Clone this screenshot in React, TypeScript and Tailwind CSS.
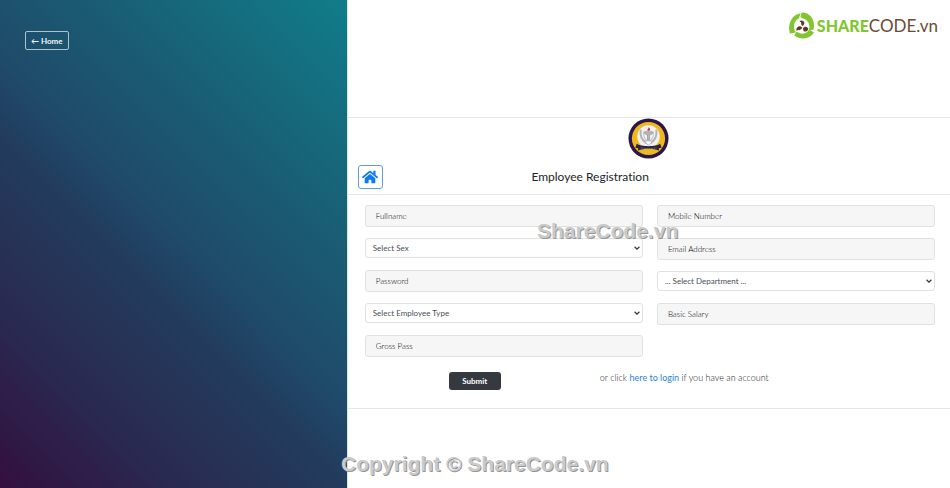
import { FaHome } from "react-icons/fa"

interface FieldProps {
  label: string
  type?: string
}

function TextField({ label, type = "text" }: FieldProps) {
  return (
    <input
      type={type}
      aria-label={label}
      placeholder={label}
      className="h-[22px] w-full min-w-0 rounded-[3px] border border-[#dfe1e3] bg-[#f6f6f6] px-[10px] text-[8px] font-light text-black placeholder:text-black placeholder:opacity-100"
    />
  )
}

function SelectField({ label, options }: { label: string; options: string[] }) {
  return (
    <div className="relative mb-px flex">
      <select
        aria-label={label}
        defaultValue=""
        className="h-5 w-full min-w-0 appearance-none rounded-[3px] border border-[#dfe1e3] bg-white px-[7px] text-[8px] text-[#495057]"
      >
        <option value="">{label}</option>
        {options.map((o) => (
          <option key={o}>{o}</option>
        ))}
      </select>
      <svg
        viewBox="0 0 6 4"
        className="pointer-events-none absolute right-[3px] top-2 h-1 w-[6px]"
        fill="none"
        aria-hidden="true"
      >
        <path d="M.6.7 3 3.1 5.4.7" stroke="#343a40" strokeWidth="1.3" />
      </svg>
    </div>
  )
}

function SiteLogo() {
  return (
    <div className="flex items-center gap-[2px]">
      <svg viewBox="0 0 26 27" className="h-[27px] w-[26px]" fill="none" aria-hidden="true">
        {/* three swooshes around the propeller */}
        <g fill="#80c62f">
          <path d="M.8 21.500C-1.600 11.500 2.800 2.600 11.600 1.200L10 6.200C5.600 8.400 4.200 13 5.400 17.600L6.800 20.600Z" />
          <path d="M12.600.6C21.400.4 26.600 8.400 24.600 17.400L19.600 18.600C21.800 13 19 7.800 13.800 6.600L11.400 5Z" />
          <path d="M25 20.600C21 27.200 11.400 28.600 5.200 23.200L7.800 19.600C11 22.400 15.600 22.200 18.400 19.800L20.200 17.800Z" />
        </g>
        <g fill="#5e3a22">
          <path d="M10.400 9.200C12.600 7.600 15.600 8.800 15.400 11.400L13.800 14.200C12.600 13.800 11.800 12.400 12.200 10.600Z" />
          <path d="M7.600 18.800C6.800 16.200 8.800 13.800 11.400 14.200L13.200 15.600C12.800 17.200 11.200 18.600 9.200 18Z" />
          <path d="M19.200 16.200C19.600 18.600 17.200 20.200 14.800 19.200L13.800 16.400C14.800 15 16.600 14.400 18 15.200Z" />
        </g>
      </svg>
      <p className="text-[17px] leading-6">
        <span className="text-[16px] font-black text-[#80c62f]">SHARE</span>
        <span className="text-[#6b4a36]">CODE.vn</span>
      </p>
    </div>
  )
}

function Crest() {
  return (
    <svg viewBox="0 0 42 42" className="size-[41px]" fill="none" aria-hidden="true">
      <circle cx="21" cy="21" r="20.5" fill="#2b1747" />
      <circle cx="21" cy="21" r="17" fill="#efb91e" />
      <circle cx="21" cy="19" r="11.5" fill="#f1f1f1" />
      <path d="M13 12c-1 7 1 11 6 14M29 12c1 7-1 11-6 14" stroke="#b3b3b9" strokeWidth="2" />
      <path d="M16 14c-.5 5 1 8 4 10M26 14c.5 5-1 8-4 10" stroke="#c9c9ce" strokeWidth="1.2" />
      <path d="M17 14h8v2l-3 1.500v5h-2v-5L17 16Z" fill="#b5b5bb" stroke="#85858d" strokeWidth=".6" />
      <path d="M16.5 23.5h9L21 28Z" fill="#fff" stroke="#a4a4aa" strokeWidth=".8" />
      <path d="M19.800 13c0-1.800 1.200-2 1.200-3.600 2 1.400 2 2.600 1.200 3.600Z" fill="#cf3434" />
      <path d="M9 26.500c4 3.200 20 3.200 24 0l1.500 4-3 .5.500 2.500c-7-2.500-15-2.500-22 0l.5-2.500-3-.5Z" fill="#2b2449" />
      <path d="M13 30.500c5 1.300 11 1.300 16 0" stroke="#8d85a0" strokeWidth=".8" strokeDasharray="1 .7" />
    </svg>
  )
}

const watermark =
  "pointer-events-none absolute whitespace-nowrap font-['Liberation_Sans',sans-serif] text-[21px] font-bold leading-6 text-[#cacaca] [text-shadow:1px_1px_0_#969696]"

export default function App() {
  return (
    <div className="relative flex min-h-screen overflow-hidden bg-white font-['Lato',sans-serif] text-[#212529] [font-variant-ligatures:none]">
      <aside className="flex w-[36.5%] items-start bg-[linear-gradient(45deg,#330f3e_0%,#2a2850_20%,#223c5d_42%,#1f4b6b_52%,#1a5b72_68%,#107d89_100%)] px-[25px] py-[31px]">
        <a
          href="#home"
          className="flex h-[19px] items-center rounded-[2px] border border-[#a9c3cf] px-[5px] text-[8px] font-bold text-[#eef5f7]"
        >
          ← Home
        </a>
      </aside>

      <main className="flex min-w-0 flex-1 flex-col border-l border-[#d5e6ea]">
        <header className="flex h-[117px] items-start justify-end px-3 pt-3">
          <SiteLogo />
        </header>

        <section className="border-y border-[#e4e6e8]">
          <div className="flex flex-col border-b border-[#e4e6e8] pb-[5px]">
            <div className="flex justify-center">
              <Crest />
            </div>
            <div className="mt-[6px] flex w-1/2 items-center justify-between pl-[10px]">
              <a
                href="#home"
                aria-label="Home"
                className="flex h-6 w-[25px] items-center justify-center rounded-[3px] border border-[#5b9fd6] text-[#0f7af0]"
              >
                <FaHome size={16} />
              </a>
              <h1 className="text-[12px] leading-4">Employee Registration</h1>
            </div>
          </div>

          <form className="pl-[17px] pr-[15px] pt-[10px] pb-[18px]" onSubmit={(e) => e.preventDefault()}>
            <div className="grid grid-cols-2 gap-x-[14px]">
              <div className="flex flex-col gap-[11px]">
                <TextField label="Fullname" />
                <SelectField label="Select Sex" options={["Male", "Female"]} />
                <TextField label="Password" type="password" />
                <SelectField label="Select Employee Type" options={["Full Time", "Part Time"]} />
                <TextField label="Gross Pass" />
              </div>
              <div className="flex flex-col gap-[11px]">
                <TextField label="Mobile Number" type="tel" />
                <TextField label="Email Address" type="email" />
                <SelectField label="... Select Department ..." options={["Accounts", "Engineering"]} />
                <TextField label="Basic Salary" />
              </div>
            </div>

            <div className="mt-[15px] grid grid-cols-[220fr_350fr] items-start">
              <div className="flex justify-center">
                <button
                  type="submit"
                  className="h-[18px] w-[52px] rounded-[3px] bg-[#343a40] text-[8px] font-bold text-white"
                >
                  Submit
                </button>
              </div>
              <p className="pl-[15px] text-[9px] font-light leading-3">
                or click <a href="#login" className="font-normal text-[#2b84cc]">here to login</a> if you have an account
              </p>
            </div>
          </form>
        </section>
      </main>

      <p className={`${watermark} left-[537px] top-[219px]`}>ShareCode.vn</p>
      <p className={`${watermark} left-[341px] top-[452px]`}>Copyright © ShareCode.vn</p>
    </div>
  )
}
